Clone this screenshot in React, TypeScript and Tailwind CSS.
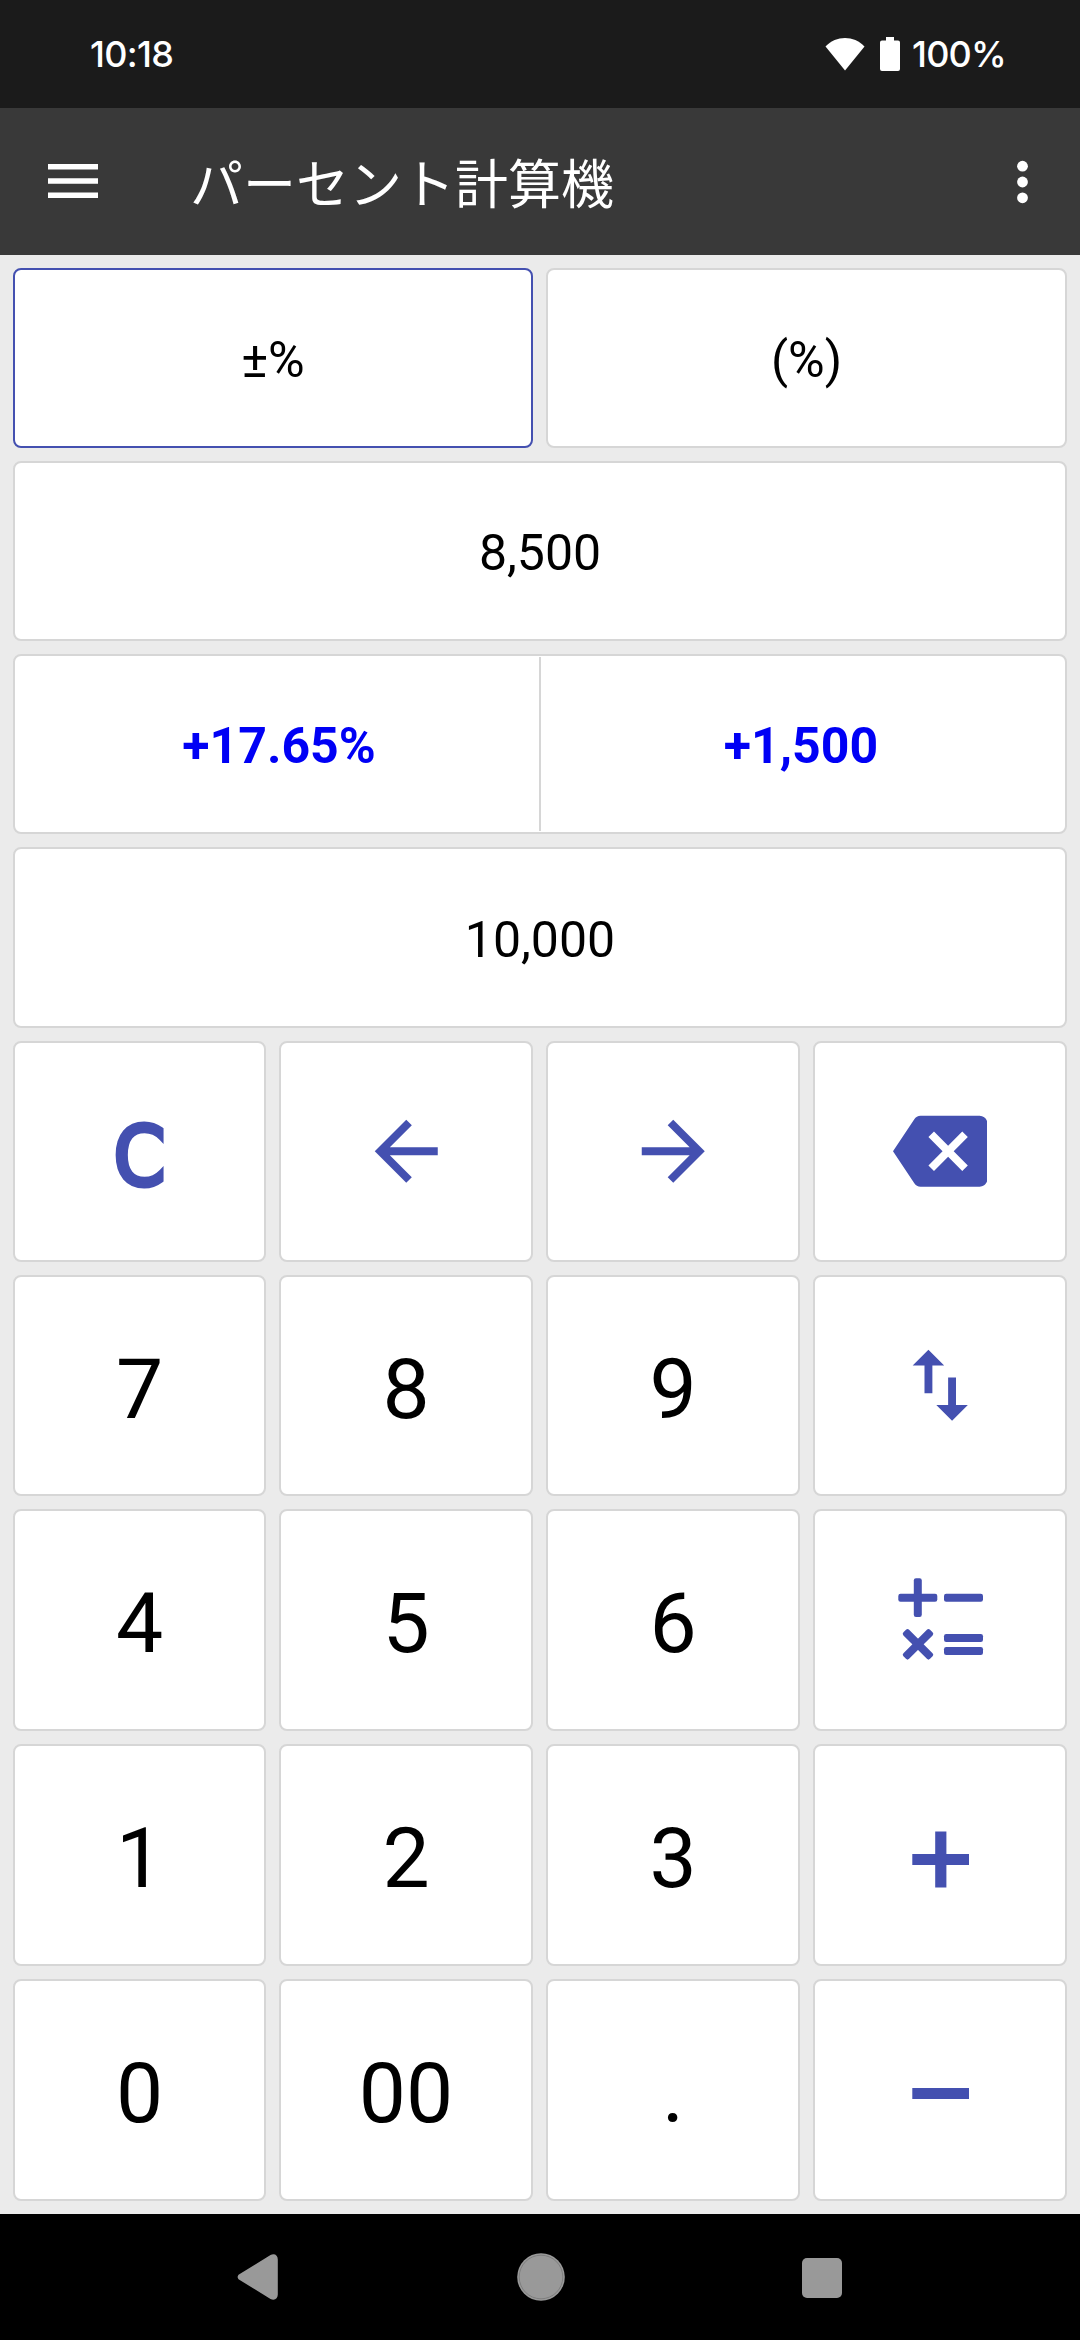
import React, { useState } from 'react';
import clsx from 'clsx';

interface KeyItem {
  id: string;
  label: React.ReactNode;
}

const ArrowBackIcon = () => (
  <svg className="size-[94.5px]" viewBox="0 0 24 24" fill="currentColor">
    <path d="M20 11H7.83l5.59-5.59L12 4l-8 8 8 8 1.41-1.41L7.83 13H20v-2z" />
  </svg>
);

const ArrowForwardIcon = () => (
  <svg className="size-[94.5px]" viewBox="0 0 24 24" fill="currentColor">
    <path d="M12 4l-1.41 1.41L16.17 11H4v2h12.17l-5.58 5.59L12 20l8-8z" />
  </svg>
);

const BackspaceIcon = () => (
  <svg className="size-[94.5px]" viewBox="0 0 24 24" fill="currentColor">
    <path d="M22 3H7c-.69 0-1.23.35-1.59.88L0 12l5.41 8.11c.36.53.9.89 1.59.89h15c1.1 0 2-.9 2-2V5c0-1.1-.9-2-2-2zm-3 12.59L17.59 17 14 13.41 10.41 17 9 15.59 12.59 12 9 8.41 10.41 7 14 10.59 17.59 7 19 8.41 15.41 12 19 15.59z" />
  </svg>
);

const SwapIcon = () => (
  <svg className="size-[94.5px]" viewBox="0 0 24 24" fill="currentColor">
    <path d="M9 3L5 6.99h3V14h2V6.99h3L9 3zm7 14.01V10h-2v7.01h-3L15 21l4-3.99h-3z" />
  </svg>
);

const CalculateIcon = () => (
  <svg className="size-24" viewBox="0 0 96 96" fill="currentColor">
    <rect x="6.3" y="21.7" width="39" height="8" rx="2.2" />
    <rect x="21.8" y="6.3" width="8" height="38.7" rx="2.2" />
    <rect x="52" y="21.7" width="39" height="8" rx="2.2" />
    <g transform="rotate(45 26 72.3)">
      <rect x="7.2" y="68.3" width="37.6" height="8" rx="2.2" />
      <rect x="22" y="53.5" width="8" height="37.6" rx="2.2" />
    </g>
    <rect x="52" y="62" width="39" height="8" rx="2.2" />
    <rect x="52" y="75" width="39" height="8" rx="2.2" />
  </svg>
);

const PlusIcon = () => (
  <svg className="mt-2 size-[57px]" viewBox="0 0 57 57" fill="currentColor">
    <rect x="0.3" y="23" width="56.7" height="11" />
    <rect x="23.2" y="0.5" width="11.2" height="56" />
  </svg>
);

const MinusIcon = () => (
  <svg className="mt-[7px] h-[11px] w-[57px]" viewBox="0 0 57 11" fill="currentColor">
    <rect x="0.3" y="0" width="56.7" height="11" />
  </svg>
);

const keyRows: KeyItem[][] = [
  [
    {
      id: 'clear',
      label: (
        <span className="mt-2.5 block scale-x-[0.9] font-['DejaVu_Sans',sans-serif] text-[82px] leading-none [-webkit-text-stroke:5px_currentColor]">
          C
        </span>
      ),
    },
    { id: 'prev', label: <ArrowBackIcon /> },
    { id: 'next', label: <ArrowForwardIcon /> },
    { id: 'delete', label: <BackspaceIcon /> },
  ],
  [
    { id: '7', label: '7' },
    { id: '8', label: '8' },
    { id: '9', label: '9' },
    { id: 'swap', label: <SwapIcon /> },
  ],
  [
    { id: '4', label: '4' },
    { id: '5', label: '5' },
    { id: '6', label: '6' },
    { id: 'calc', label: <CalculateIcon /> },
  ],
  [
    { id: '1', label: '1' },
    { id: '2', label: '2' },
    { id: '3', label: '3' },
    { id: 'plus', label: <PlusIcon /> },
  ],
  [
    { id: '0', label: '0' },
    { id: '00', label: '00' },
    { id: 'dot', label: '.' },
    { id: 'minus', label: <MinusIcon /> },
  ],
];

const StatusBar = () => (
  <div className="flex h-[108px] items-center justify-between bg-[#1b1b1b] pr-[76px] pl-[90px] font-['Inter',sans-serif] text-[36px] font-medium text-white">
    <span className="tracking-[-0.7px]">10:18</span>
    <div className="flex items-center">
      <svg className="h-[34px] w-10" viewBox="0 0 40 34" fill="currentColor">
        <path d="M0.5 9.5C6 3.8 12.8 1 20 1s14 2.8 19.5 8.5L20 33.5z" />
      </svg>
      <svg className="ml-[15px] h-[34px] w-5" viewBox="0 0 20 34" fill="currentColor">
        <path d="M6 0h8v3.5h4a2 2 0 0 1 2 2V32a2 2 0 0 1-2 2H2a2 2 0 0 1-2-2V5.500a2 2 0 0 1 2-2h4z" />
      </svg>
      <span className="-mr-0.5 ml-3 tracking-[-0.8px]">100%</span>
    </div>
  </div>
);

const AppBar = () => (
  <div className="flex h-[147px] items-center bg-[#393939] pr-[52px] pl-12 text-white">
    <svg className="mb-px h-[34px] w-[50px]" viewBox="0 0 50 34" fill="currentColor">
      <path d="M0 0h50v5.500H0zM0 14.200h50v5.500H0zM0 28.400h50v5.500H0z" />
    </svg>
    <h1 className="ml-[92px] flex-1 font-['Noto_Sans_CJK_JP',sans-serif] text-[53px] leading-none">
      パーセント計算機
    </h1>
    <svg className="h-[44px] w-[11px]" viewBox="0 0 11 44" fill="currentColor">
      <circle cx="5.5" cy="6.2" r="5.4" />
      <circle cx="5.5" cy="22" r="5.4" />
      <circle cx="5.5" cy="37.800" r="5.4" />
    </svg>
  </div>
);

const NavigationBar = () => (
  <div className="flex h-[126px] items-center justify-between bg-black pr-[238px] pl-[237px] text-[#999999]">
    <svg className="h-[46px] w-[42px]" viewBox="0 0 42 46" fill="currentColor">
      <path d="M2.300 20.200L33.500 1.100c4-2 7.300.2 7.300 4.400v35c0 4.200-3.300 6.400-7.300 4.400L2.300 25.800c-2.200-1.500-2.200-4.100 0-5.600z" />
    </svg>
    <svg className="size-12" viewBox="0 0 48 48">
      <circle cx="24" cy="24" r="23.800" fill="currentColor" />
      <circle cx="24" cy="24" r="21.800" fill="none" stroke="#777777" strokeWidth="0.8" />
    </svg>
    <div className="mt-px size-10 rounded-[5px] bg-[#999999]" />
  </div>
);

const App: React.FC = () => {
  const [mode, setMode] = useState<'change' | 'percent'>('change');

  return (
    <div className="flex h-[2340px] w-[1080px] flex-col bg-[#ebebeb] font-['Roboto',sans-serif] text-black">
      <StatusBar />
      <AppBar />

      <main className="flex flex-1 flex-col gap-[13px] p-[13px]">
        {/* Mode */}
        <div className="grid h-[180px] grid-cols-[520px_521px] gap-[13px] text-[50px]">
          <button
            onClick={() => setMode('change')}
            className={clsx(
              'rounded-lg border-2 bg-white pt-1',
              mode === 'change' ? 'border-[#4450b0]' : 'border-[#d6d6d6]'
            )}
          >
            ±%
          </button>
          <button
            onClick={() => setMode('percent')}
            className={clsx(
              'rounded-lg border-2 bg-white pt-1',
              mode === 'percent' ? 'border-[#4450b0]' : 'border-[#d6d6d6]'
            )}
          >
            (%)
          </button>
        </div>

        {/* Values */}
        <div className="flex h-[180px] items-center justify-center rounded-lg border-2 border-[#d6d6d6] bg-white pt-1 text-[50px]">
          8,500
        </div>
        <div className="flex h-[180px] rounded-lg border-2 border-[#d6d6d6] bg-white py-px text-[50px] font-bold text-[#0000f5]">
          <div className="flex flex-1 items-center justify-center pt-1 pl-1">+17.65%</div>
          <div className="w-[2px] bg-[#d6d6d6]" />
          <div className="flex flex-1 items-center justify-center pt-1 pr-1">+1,500</div>
        </div>
        <div className="flex h-[181px] items-center justify-center rounded-lg border-2 border-[#d6d6d6] bg-white pt-[5px] text-[50px]">
          10,000
        </div>

        {/* Keypad */}
        <div className="grid grid-cols-[253px_254px_254px_254px] grid-rows-[221px_221px_222px_222px_222px] gap-[13px]">
          {keyRows.flat().map((item) => (
            <button
              key={item.id}
              className={clsx(
                'flex items-center justify-center rounded-lg border-2 border-[#d6d6d6] bg-white',
                typeof item.label === 'string' ? 'pt-2 text-[84px] leading-none' : 'text-[#4450b0]'
              )}
            >
              {item.label}
            </button>
          ))}
        </div>
      </main>

      <NavigationBar />
    </div>
  );
};

export default App;
